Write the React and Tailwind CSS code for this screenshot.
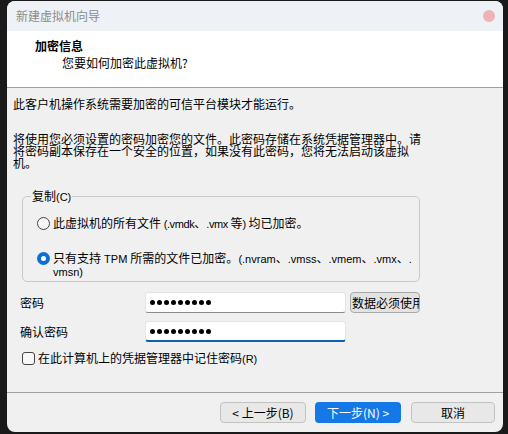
import React from "react";

const cjk = { fontFamily: '"Noto Sans CJK SC", "Liberation Sans", sans-serif' };
const latin = "text-[11px] font-['Liberation_Sans']";
const latinTight = "text-[11px] font-['Liberation_Sans'] tracking-[-0.4px]";

// masked password value drawn as nine dots
const Dots = () => (
  <div className="flex items-center gap-[2px] pl-[4px]">
    {Array.from({ length: 9 }).map((_, i) => (
      <span key={i} className="w-[5px] h-[5px] rounded-full bg-black" />
    ))}
  </div>
);

const Radio = ({ checked }) =>
  checked ? (
    <span className="w-[13px] h-[13px] rounded-full bg-[#0a6fd6] flex items-center justify-center shrink-0">
      <span className="w-[5px] h-[5px] rounded-full bg-white" />
    </span>
  ) : (
    <span className="w-[13px] h-[13px] rounded-full border border-[#444] bg-[#f7f7f7] shrink-0" />
  );

const Button = ({ children, primary }) => (
  <button
    className={
      primary
        ? "w-[86px] h-[21px] rounded-[4px] bg-[#1479e6] text-white text-[12px] leading-none flex items-center justify-center"
        : "w-[86px] h-[21px] rounded-[4px] bg-[#e8e8e8] border border-[#c2c2c2] text-black text-[12px] leading-none flex items-center justify-center"
    }
  >
    {children}
  </button>
);

export default function App() {
  return (
    <div className="w-[508px] h-[434px] bg-[#1a1a1a] pl-[7px] pt-[1px]" style={cjk}>
      <div className="w-[496px] h-[431px] rounded-lg overflow-hidden flex flex-col bg-[#f0f0f0] text-[12px] leading-[12px] text-black">
        {/* title bar */}
        <div className="h-[30px] bg-[#eef2f6] flex items-center justify-between pl-[9px] pr-[8px] shrink-0">
          <span className="text-[#8c8c8c] text-[12px]">新建虚拟机向导</span>
          <span className="w-[12px] h-[12px] rounded-full bg-[#f0b3b3]" />
        </div>

        {/* header */}
        <div className="h-[57px] bg-white border-b border-[#a0a0a0] shrink-0 flex flex-col">
          <div className="pl-[28px] pt-[9px] font-bold">加密信息</div>
          <div className="pl-[55px] pt-[5px]">您要如何加密此虚拟机?</div>
        </div>

        {/* body */}
        <div className="h-[304px] flex flex-col pl-[6px] shrink-0">
          <p className="mt-[10px]">此客户机操作系统需要加密的可信平台模块才能运行。</p>
          <p className="mt-[23px] leading-[12px]">
            将使用您必须设置的密码加密您的文件。此密码存储在系统凭据管理器中。请
            <br />
            将密码副本保存在一个安全的位置，如果没有此密码，您将无法启动该虚拟
            <br />
            机。
          </p>

          <div className="relative mt-[27px] ml-[9px] w-[398px] h-[86px] border border-[#c9c9c9] rounded-[5px] pt-[18px] pl-[14px]">
            <span className="absolute -top-[7px] left-[8px] px-[1px] bg-[#f0f0f0]">
              复制<span className={latin}>(C)</span>
            </span>
            <div className="flex items-center h-[16px] gap-[3px]">
              <Radio />
              <span className="whitespace-nowrap">
                此虚拟机的所有文件<span className={latinTight}> (.vmdk</span>、<span className={latinTight}>.vmx </span>等<span className={latinTight}>) </span>均已加密。
              </span>
            </div>
            <div className="flex items-start mt-[21px] gap-[3px]">
              <Radio checked />
              <span>
                只有支持<span className={latin}> TPM </span>所需的文件已加密。<span className={latin}>(.nvram</span>、<span className={latin}>.vmss</span>、<span className={latin}>.vmem</span>、<span className={latin}>.vmx</span>、<span className={latin}>.</span>
                <br />
                <span className={latin}>vmsn)</span>
              </span>
            </div>
          </div>

          <div className="flex items-center h-[21px] mt-[10px] pl-[7px]">
            <span className="w-[125px]">密码</span>
            <div className="w-[201px] h-[21px] bg-white border border-[#e4e4e4] border-b-[#8a8a8a] rounded-[3px] flex items-center">
              <Dots />
            </div>
            <div className="ml-[4px] w-[70px] h-[21px] bg-[#e3e3e3] border border-[#a8a8a8] rounded-[4px] overflow-hidden whitespace-nowrap flex items-center pl-[1px]">
              数据必须使用
            </div>
          </div>

          <div className="flex items-center h-[21px] mt-[8px] pl-[7px]">
            <span className="w-[125px]">确认密码</span>
            <div className="w-[201px] h-[21px] bg-white border border-[#e4e4e4] border-b-2 border-b-[#0a62b0] rounded-[3px] flex items-center">
              <Dots />
            </div>
          </div>

          <div className="flex items-center h-[14px] mt-[9px] pl-[9px] gap-[3px]">
            <span className="w-[13px] h-[13px] rounded-[3px] border border-[#444] bg-[#f7f7f7]" />
            <span>在此计算机上的凭据管理器中记住密码<span className={latin}>(R)</span></span>
          </div>
        </div>

        {/* footer */}
        <div className="flex-1 border-t border-[#a0a0a0] flex justify-end items-start pt-[9px] pr-[8px]">
          <Button>&lt; 上一步(B)</Button>
          <span className="w-[9px]" />
          <Button primary>下一步(N) &gt;</Button>
          <span className="w-[10px]" />
          <button className="w-[84px] h-[21px] rounded-[4px] bg-[#e8e8e8] border border-[#c2c2c2] text-[12px] leading-none flex items-center justify-center">
            取消
          </button>
        </div>
      </div>
    </div>
  );
}
